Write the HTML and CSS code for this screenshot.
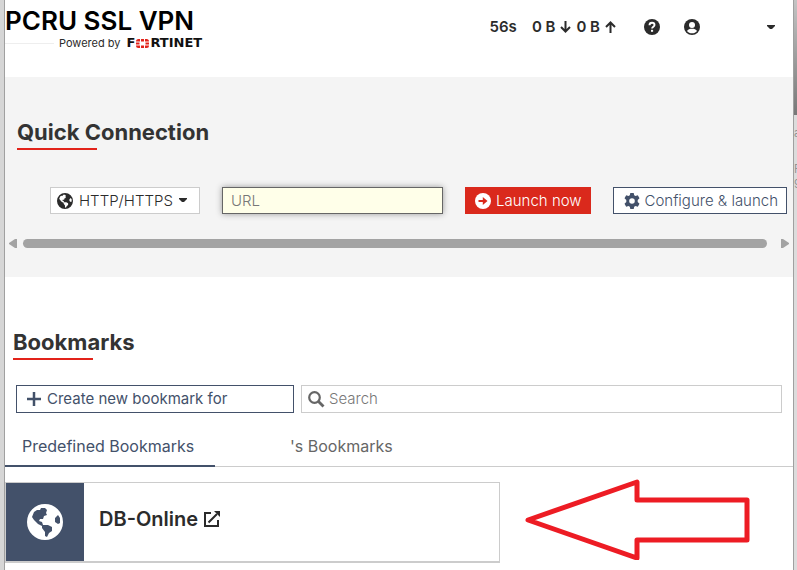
FILE: index.html
```html
<!DOCTYPE html>
<html lang="en">

<head>
    <meta charset="UTF-8">
    <meta name="viewport" content="width=device-width, initial-scale=1.0">
    <title>PCRU SSL VPN</title>
    <link rel="stylesheet" href="styles.css">
</head>

<body>
    <svg class="defs" aria-hidden="true">
        <symbol id="globe" viewBox="0 0 36 36">
            <path fill-rule="evenodd" d="M18 0a18 18 0 1 0 0 36a18 18 0 1 0 0-36z
                M5 13L7 8L10 6L13 6L14 4L18 4L20 6L19 9L20 11L17 12L16 15L13 15L12 17L15 18L16 21L21 21L25 23L25 27L22 29L20 33L18 32L18 28L15 24L15 22L11 20L7 16z
                M31 11L28 14L28 18L31 20L33 19L33 14z" />
        </symbol>
        <symbol id="caret" viewBox="0 0 8 5">
            <path d="M0 0h8v1L5 4H3L0 1z" />
        </symbol>
    </svg>

    <div class="page">
        <header class="top">
            <div class="brand">
                <h1>PCRU SSL VPN</h1>
                <div class="powered">
                    <span class="line"></span>
                    <span>Powered by</span>
                    <span class="logo">F<svg class="grid" width="13" height="9" viewBox="0 0 13 9">
                            <path d="M0 2.500a2.500 2.500 0 0 1 2.500-2.500H4v2.500H0zM5 0h3v2.500H5zM9 0h1.500A2.500 2.500 0 0 1 13 2.500H9zM0 3.500h3.500v2H0zM9.500 3.500H13v2H9.500zM0 6.500h4V9H2.500A2.500 2.500 0 0 1 0 6.500zM5 6.500h3V9H5zM9 6.500h4A2.500 2.500 0 0 1 10.500 9H9z" />
                        </svg>RTINET</span>
                </div>
            </div>
            <div class="status">
                <span class="time">56s</span>
                <span class="traffic">0 B
                    <svg width="11" height="12" viewBox="0 0 11 12"><path d="M5.500 0v10.500M1 6l4.500 4.500L10 6" /></svg>
                    0 B
                    <svg width="11" height="12" viewBox="0 0 11 12"><path d="M5.500 12V1.500M1 6l4.500-4.500L10 6" /></svg>
                </span>
                <button class="icon-bt" aria-label="Help">
                    <svg width="16" height="16" viewBox="0 0 16 16">
                        <circle cx="8" cy="8" r="8" />
                        <path d="M5.500 6.200C5.500 4.600 6.600 3.700 8 3.700s2.500.9 2.500 2.200c0 1.800-2.400 1.800-2.400 3.700" fill="none" stroke="#fff" stroke-width="1.900" />
                        <path d="M7 10.800h2.100v2H7z" fill="#fff" />
                    </svg>
                </button>
                <button class="icon-bt user" aria-label="User">
                    <svg width="16" height="16" viewBox="0 0 16 16">
                        <circle cx="8" cy="8" r="8" />
                        <circle cx="8" cy="6" r="3" fill="#fff" />
                        <path d="M3 12c1-1.700 2.600-2.200 5-2.200s4 .5 5 2.200c-1.200 1.500-3 2.300-5 2.300S4.200 13.500 3 12z" fill="#fff" />
                    </svg>
                    <svg width="8" height="5"><use href="#caret" /></svg>
                </button>
            </div>
        </header>

        <section class="quick">
            <h2>Quick Connection</h2>
            <form class="launch">
                <label class="type">
                    <svg width="16" height="16"><use href="#globe" /></svg>
                    <select aria-label="Connection type">
                        <option>HTTP/HTTPS</option>
                    </select>
                    <svg width="8" height="5"><use href="#caret" /></svg>
                </label>
                <input class="url" type="text" placeholder="URL" aria-label="URL">
                <button class="bt red" type="button">
                    <svg width="16" height="16" viewBox="0 0 16 16">
                        <circle cx="8" cy="8" r="8" fill="#fff" />
                        <path d="M3.500 7h4.300V4l4.700 4-4.700 4V9H3.500z" fill="#da291c" />
                    </svg>
                    Launch now
                </button>
                <button class="bt config" type="button">
                    <svg width="16" height="16" viewBox="0 0 16 16">
                        <path fill-rule="evenodd" d="M6.300 0h3.400l.5 2.300 1.300.8 2.300-.8 1.700 3-1.800 1.600v2.200l1.800 1.600-1.700 3-2.300-.8-1.300.8-.5 2.300H6.300l-.5-2.300-1.300-.8-2.300.8-1.700-3 1.800-1.600V6.900L.5 5.300l1.700-3 2.300.8 1.300-.8zM8 5.200a2.800 2.800 0 1 0 0 5.600a2.800 2.800 0 1 0 0-5.600z" />
                    </svg>
                    Configure &amp; launch
                </button>
            </form>
            <div class="scroll">
                <svg width="8" height="9" viewBox="0 0 8 9"><path d="M8 0v9H6L0 5V4l6-4z" /></svg>
                <span class="thumb"></span>
                <svg width="8" height="9" viewBox="0 0 8 9"><path d="M0 0v9h2l6-4V4L2 0z" /></svg>
            </div>
        </section>

        <section class="bookmarks">
            <h2>Bookmarks</h2>
            <div class="tools">
                <button class="bt create">
                    <svg width="14" height="14" viewBox="0 0 14 14"><path d="M6 0h2v6h6v2H8v6H6V8H0V6h6z" stroke="#43516a" stroke-width=".5" /></svg>
                    Create new bookmark for
                </button>
                <label class="search">
                    <svg class="lens" width="17" height="17" viewBox="0 0 17 17">
                        <circle cx="6.500" cy="6.500" r="5.300" stroke-width="2.200" />
                        <path d="M10.500 10.500l5 5" stroke-width="2.800" />
                    </svg>
                    <input type="text" placeholder="Search" aria-label="Search">
                </label>
            </div>
            <nav class="tabs">
                <a class="active" href="#predefined">Predefined Bookmarks</a>
                <a class="own" href="#own">'s Bookmarks</a>
            </nav>
            <div class="list" id="predefined">
                <a class="card" href="#db-online">
                    <span class="tile"><svg width="36" height="36"><use href="#globe" /></svg></span>
                    <span class="name">DB-Online
                        <svg width="16" height="16" viewBox="0 0 16 16">
                            <path d="M7 2H1v13h13V9M4.500 11.500L13 3" fill="none" stroke="#2b2b2b" stroke-width="2" />
                            <path d="M10 0h6v6z" />
                        </svg>
                    </span>
                </a>
                <svg class="arrow" width="226" height="82" viewBox="0 0 226 82">
                    <path d="M3 42L112 4v18h110v40H112v18z" />
                </svg>
            </div>
        </section>
    </div>

    <aside class="behind">
        <div class="shade"></div>
        <p>a</p>
        <p>R</p>
        <p>9</p>
    </aside>
</body>

</html>
```

FILE: styles.css
```css
* {
    box-sizing: border-box;
}

body {
    display: grid;
    grid-template-columns: minmax(0, 1fr) 3px;
    min-height: 100vh;
    margin: 0;
    padding-left: 4px;
    background: #d6d6d6;
    color: #2b2b2b;
    font-family: Inter, "Liberation Sans", sans-serif;
    font-size: 15px;
    font-weight: 300;
    line-height: 20px;
}

.defs {
    position: absolute;
    width: 0;
    height: 0;
}

svg {
    flex: none;
    fill: currentColor;
}

button, input, select {
    font: inherit;
    color: inherit;
}

a {
    color: inherit;
    text-decoration: none;
}

.page {
    border-left: 1px solid #a0a0a0;
    border-right: 1px solid #a0a0a0;
    background: #fff;
}

/* header */
.top {
    display: flex;
    justify-content: space-between;
    height: 77px;
}

h1 {
    margin: 0;
    padding-top: 5px;
    color: #000;
    font-size: 26px;
    font-weight: 600;
    line-height: 32px;
}

.powered {
    display: flex;
    align-items: center;
    gap: 5px;
    font-size: 11px;
    font-weight: 400;
    line-height: 12px;
}

.line {
    width: 49px;
    height: 1px;
    background: #eee;
}

.logo {
    display: flex;
    align-items: center;
    margin-left: 1px;
    color: #111;
    font-family: "DejaVu Sans", sans-serif;
    font-size: 13px;
    font-weight: bold;
}

.grid {
    margin: 0 1px;
    fill: #e2231a;
}

.status {
    display: flex;
    align-items: center;
    height: 54px;
    padding-right: 18px;
    font-weight: 600;
}

.traffic {
    display: flex;
    align-items: center;
    gap: 5px;
    margin: 0 28px 0 15px;
}

.traffic svg {
    fill: none;
    stroke: currentColor;
    stroke-width: 2;
}

.icon-bt {
    display: flex;
    align-items: center;
    margin-right: 24px;
    padding: 0;
    border: 0;
    background: none;
}

.user {
    gap: 67px;
    margin: 0;
}

/* quick connection */
h2 {
    margin: 0;
    color: #333;
    font-size: 22px;
    font-weight: 700;
    line-height: 30px;
}

h2::after {
    content: "";
    display: block;
    width: 80px;
    height: 2px;
    margin-top: 1px;
    background: #e2231a;
}

.quick {
    height: 200px;
    padding: 40px 4px 0;
    background: #f4f4f4;
}

.quick h2 {
    padding-left: 8px;
}

.launch {
    display: flex;
    gap: 22px;
    padding: 37px 2px 25px 41px;
}

.bt, .type, .search {
    display: flex;
    align-items: center;
    gap: 5px;
    height: 27px;
    padding: 0 8px;
    border: 1px solid #43516a;
    background: #fff;
    color: #43516a;
    white-space: nowrap;
}

.config {
    padding-left: 10px;
}

.type {
    gap: 6px;
    width: 150px;
    padding: 0 6px;
    border-color: #ccc;
    color: #2b2b2b;
}

select {
    appearance: none;
    padding: 0;
    border: 0;
    background: none;
}

.url {
    flex: 1;
    min-width: 0;
    height: 27px;
    padding: 0 8px;
    border: 1px solid #666;
    background: #ffffe9;
    box-shadow: 0 0 6px #999;
}

input::placeholder {
    color: #777;
    opacity: 1;
}

.red {
    padding-left: 9px;
    border-color: #da291c;
    background: #da291c;
    color: #fff;
}

.scroll {
    display: flex;
    align-items: center;
    color: #a3a3a3;
}

.thumb {
    flex: 1;
    height: 9px;
    margin: 0 14px 0 6px;
    border-radius: 5px;
    background: #a3a3a3;
}

/* bookmarks */
.bookmarks {
    padding-top: 50px;
}

.bookmarks h2 {
    padding-left: 8px;
}

.tools {
    display: flex;
    gap: 7px;
    padding: 25px 11px 0;
}

.create {
    gap: 6px;
    width: 278px;
    height: 28px;
    padding: 0 10px;
    font-weight: 400;
}

.search {
    flex: 1;
    gap: 4px;
    height: 28px;
    padding: 0 6px;
    border-color: #ccc;
}

.lens {
    fill: none;
    stroke: #666;
}

.search input {
    flex: 1;
    min-width: 0;
    padding: 0;
    border: 0;
    background: none;
}

.tabs {
    display: flex;
    border-bottom: 1px solid #ccc;
    font-size: 16px;
    font-weight: 400;
}

.tabs a {
    padding: 23px 17px 9px;
    color: #666;
}

.tabs .active {
    min-width: 210px;
    margin-bottom: -1px;
    border-bottom: 2px solid #43516a;
    color: #43516a;
}

.tabs .own {
    margin-left: 58px;
}

.list {
    display: flex;
    align-items: flex-start;
    padding-top: 11px;
}

.card {
    display: flex;
    flex: 1;
    gap: 15px;
    height: 81px;
    margin-top: 4px;
    border: 1px solid #ccc;
    border-bottom-width: 2px;
}

.tile {
    display: flex;
    align-items: center;
    justify-content: center;
    width: 78px;
    background: #43516a;
    color: #fff;
}

.name {
    display: flex;
    align-items: center;
    gap: 6px;
    padding-bottom: 6px;
    font-size: 20px;
    font-weight: 600;
}

.arrow {
    margin: 0 42px 0 25px;
    fill: none;
    stroke: #ed1c24;
    stroke-width: 5;
    stroke-linejoin: round;
}

/* strip of the page behind */
.behind {
    overflow: hidden;
    background: #dcdcdc;
    color: #888;
    font-size: 12px;
}

.shade {
    height: 115px;
    background: linear-gradient(#c4c4c4, #777);
}

.behind p {
    margin: 8px 0 18px;
    line-height: 20px;
}

.behind p + p {
    margin: 0;
    line-height: 15px;
}
```
